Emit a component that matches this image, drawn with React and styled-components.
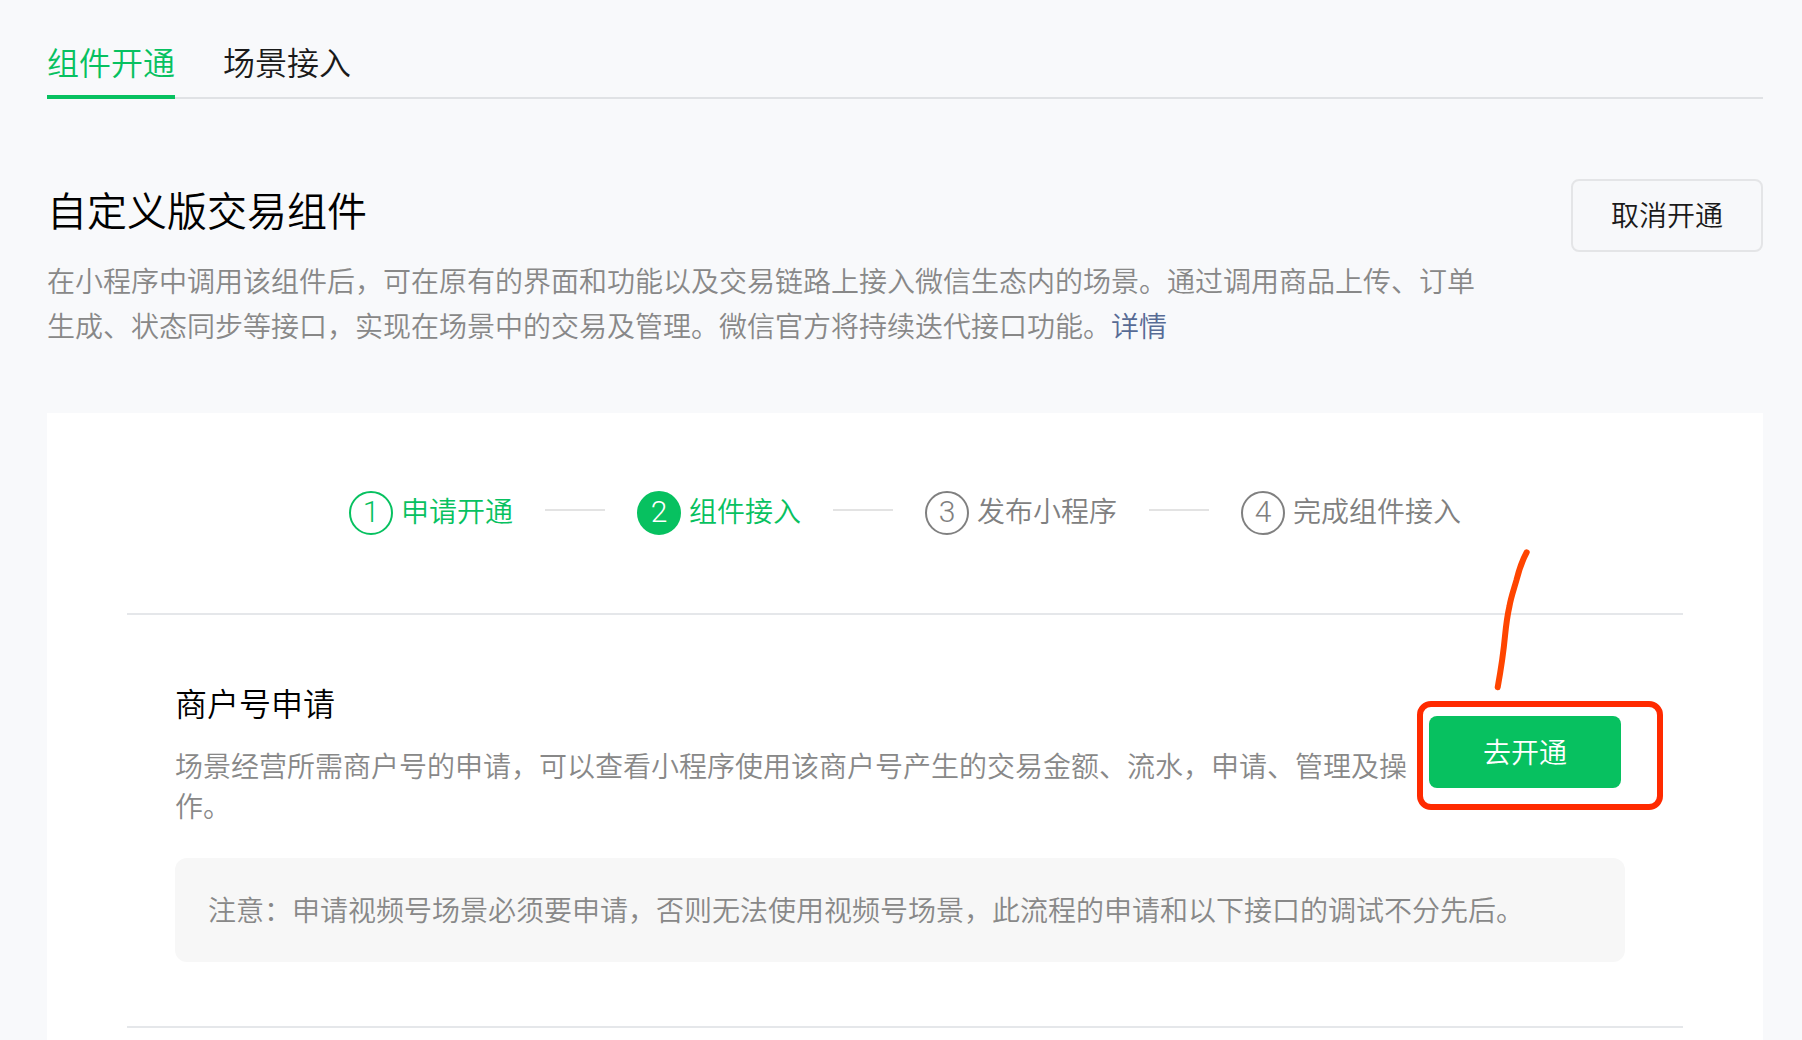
import React from "react";
import styled, { createGlobalStyle } from "styled-components";

const Global = createGlobalStyle`
  html, body { margin: 0; height: 1040px; overflow: hidden; background: #f8f9fb; }
  body { font-family: "Liberation Sans", "Noto Sans CJK SC", sans-serif; font-size: 28px; font-weight: 350; color: #1a1a1a; }
  * { box-sizing: border-box; }
`;

const Page = styled.div`
  width: 1802px;
  height: 1040px;
  padding: 0 39px 0 47px;
  overflow: hidden;
`;

const TabBar = styled.div`
  display: flex;
  gap: 48px;
  height: 99px;
  border-bottom: 2px solid #e0e2e5;
`;

const Tab = styled.div`
  height: 99px;
  padding-top: 41px;
  font-size: 32px;
  line-height: 46px;
  color: ${(p) => (p.$active ? "#07c160" : "#1a1a1a")};
  border-bottom: 4px solid ${(p) => (p.$active ? "#07c160" : "transparent")};
`;

const Header = styled.div`
  display: flex;
  justify-content: space-between;
  align-items: flex-start;
  margin-top: 80px;
`;

const Title = styled.h1`
  margin: 5px 0 0;
  font-size: 40px;
  font-weight: 350;
  line-height: 56px;
  color: #000;
`;

const GhostButton = styled.button`
  width: 192px;
  height: 73px;
  padding: 0 0 3px;
  border: 2px solid #e4e5e7;
  border-radius: 8px;
  background: #f7f8fa;
  font: inherit;
  color: #1a1a1a;
`;

const Description = styled.p`
  width: 1440px;
  margin: 8px 0 0;
  line-height: 45px;
  color: #888;
`;

const DetailLink = styled.a`
  color: #576b95;
`;

const Card = styled.div`
  position: relative;
  margin-top: 63px;
  padding: 0 80px 40px;
  background: #fff;
`;

const Steps = styled.div`
  display: flex;
  justify-content: center;
  align-items: center;
  gap: 32px;
  padding: 78px 0 78px;
  border-bottom: 2px solid #e5e7ea;
`;

const Step = styled.div`
  display: flex;
  align-items: center;
  gap: 8px;
  line-height: 44px;
  color: ${(p) => (p.$on ? "#07c160" : "#808080")};
`;

const StepNumber = styled.span`
  display: flex;
  justify-content: center;
  align-items: center;
  width: 44px;
  height: 44px;
  padding-bottom: 2px;
  border: 2px solid ${(p) => (p.$on ? "#07c160" : "#808080")};
  border-radius: 50%;
  background: ${(p) => (p.$filled ? "#07c160" : "transparent")};
  color: ${(p) => (p.$filled ? "#fff" : "inherit")};
  font-family: Roboto, "Liberation Sans", sans-serif;
  font-size: 30px;
  font-weight: 300;
`;

const StepLine = styled.span`
  width: 60px;
  height: 2px;
  margin-top: -6px;
  background: #e3e3e3;
`;

const Section = styled.section`
  padding: 68px 58px 64px 48px;
  border-bottom: 2px solid #e5e7ea;
`;

const SectionRow = styled.div`
  display: flex;
  align-items: flex-start;
  padding-right: 4px;
`;

const SectionText = styled.div`
  width: 1254px;
`;

const SectionTitle = styled.h2`
  margin: 0;
  font-size: 32px;
  font-weight: 350;
  line-height: 44px;
  color: #000;
`;

const SectionDesc = styled.p`
  margin: 21px 0 0;
  line-height: 40px;
  color: #888;
`;

const PrimaryButton = styled.button`
  flex: none;
  width: 192px;
  height: 72px;
  margin-top: 33px;
  padding: 0 0 2px;
  border: 0;
  border-radius: 8px;
  background: #07c160;
  color: #fff;
  font: inherit;
`;

const Notice = styled.div`
  height: 104px;
  margin-top: 30px;
  padding: 3px 33px 0;
  border-radius: 12px;
  background: #f7f7f7;
  line-height: 102px;
  color: #888;
`;

const HighlightBox = styled.div`
  position: absolute;
  left: 1370px;
  top: 288px;
  width: 246px;
  height: 109px;
  border: 6px solid #ff2a00;
  border-radius: 14px;
`;

const ArrowStroke = styled.svg`
  position: absolute;
  left: 1443px;
  top: 132px;
  width: 45px;
  height: 150px;
`;

const steps = [
  { n: 1, label: "申请开通", on: true },
  { n: 2, label: "组件接入", on: true, filled: true },
  { n: 3, label: "发布小程序" },
  { n: 4, label: "完成组件接入" },
];

export default function App() {
  return (
    <Page>
      <Global />
      <TabBar>
        <Tab $active>组件开通</Tab>
        <Tab>场景接入</Tab>
      </TabBar>
      <Header>
        <Title>自定义版交易组件</Title>
        <GhostButton>取消开通</GhostButton>
      </Header>
      <Description>
        在小程序中调用该组件后，可在原有的界面和功能以及交易链路上接入微信生态内的场景。通过调用商品上传、订单生成、状态同步等接口，实现在场景中的交易及管理。微信官方将持续迭代接口功能。
        <DetailLink>详情</DetailLink>
      </Description>
      <Card>
        <Steps>
          {steps.map((s, i) => (
            <React.Fragment key={s.n}>
              {i > 0 && <StepLine />}
              <Step $on={s.on}>
                <StepNumber $on={s.on} $filled={s.filled}>{s.n}</StepNumber>
                {s.label}
              </Step>
            </React.Fragment>
          ))}
        </Steps>
        <Section>
          <SectionRow>
            <SectionText>
              <SectionTitle>商户号申请</SectionTitle>
              <SectionDesc>
                场景经营所需商户号的申请，可以查看小程序使用该商户号产生的交易金额、流水，申请、管理及操作。
              </SectionDesc>
            </SectionText>
            <PrimaryButton>去开通</PrimaryButton>
          </SectionRow>
          <Notice>注意：申请视频号场景必须要申请，否则无法使用视频号场景，此流程的申请和以下接口的调试不分先后。</Notice>
        </Section>
        <HighlightBox />
        <ArrowStroke viewBox="1490 545 45 150" fill="none">
          <path
            d="M1526.7 552.3C1522 561 1519 570 1516.5 580C1514 589 1511 597 1509.5 606C1507 617 1506 626 1505 636C1503.5 652 1501 669 1497.7 687.3"
            stroke="#ff4500"
            strokeWidth="6"
            strokeLinecap="round"
          />
        </ArrowStroke>
      </Card>
    </Page>
  );
}
